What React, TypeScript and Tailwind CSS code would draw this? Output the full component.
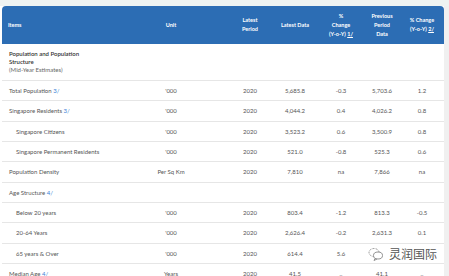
import React from 'react';

type Row = {
  item: string;
  note?: string;
  indent?: boolean;
  unit?: string;
  period?: string;
  latest?: string;
  change1?: string;
  previous?: string;
  change2?: string;
};

const rows: Row[] = [
  { item: 'Total Population', note: '3/', unit: "'000", period: '2020', latest: '5,685.8', change1: '-0.3', previous: '5,703.6', change2: '1.2' },
  { item: 'Singapore Residents', note: '3/', unit: "'000", period: '2020', latest: '4,044.2', change1: '0.4', previous: '4,026.2', change2: '0.8' },
  { item: 'Singapore Citizens', indent: true, unit: "'000", period: '2020', latest: '3,523.2', change1: '0.6', previous: '3,500.9', change2: '0.8' },
  { item: 'Singapore Permanent Residents', indent: true, unit: "'000", period: '2020', latest: '521.0', change1: '-0.8', previous: '525.3', change2: '0.6' },
  { item: 'Population Density', unit: 'Per Sq Km', period: '2020', latest: '7,810', change1: 'na', previous: '7,866', change2: 'na' },
  { item: 'Age Structure', note: '4/' },
  { item: 'Below 20 years', indent: true, unit: "'000", period: '2020', latest: '803.4', change1: '-1.2', previous: '813.3', change2: '-0.5' },
  { item: '20-64 Years', indent: true, unit: "'000", period: '2020', latest: '2,626.4', change1: '-0.2', previous: '2,631.3', change2: '0.1' },
  // последнее значение закрыто водяным знаком
  { item: '65 years & Over', indent: true, unit: "'000", period: '2020', latest: '614.4', change1: '5.6', previous: '' },
  { item: 'Median Age', note: '4/', unit: 'Years', period: '2020', latest: '41.5', change1: '..', previous: '41.1', change2: '..' },
];

const cols = 'grid grid-cols-[130px_78px_62px_46px_46px_36px_44px]';

const App = () => {
  return (
    <div className="relative w-[449px] h-[276px] overflow-hidden bg-white font-['Lato','Liberation_Sans',sans-serif]">
      <div className="h-[6px] bg-[#eef3f2]" />
      <div className="flex">
        <div className="w-[2px] bg-white" />
        <div className="w-[442px]">
          {/* шапка таблицы */}
          <div className={`${cols} h-[38px] items-center rounded-t-[4px] bg-[#2c6db4] text-[5.5px] leading-[9px] font-bold text-white`}>
            <div className="pl-[6px]">Items</div>
            <div className="text-center">Unit</div>
            <div className="pl-[18px] text-center">Latest<br />Period</div>
            <div className="text-center">Latest Data</div>
            <div className="text-center">%<br />Change<br />(Y-o-Y) <span className="underline">1/</span></div>
            <div className="text-center">Previous<br />Period<br />Data</div>
            <div className="text-center">% Change<br />(Y-o-Y) <span className="underline">2/</span></div>
          </div>

          <div className="h-[37px] border-b border-[#e6e6e6] pl-[7px] pt-[6px] text-[6px] leading-[8px]">
            <div className="font-semibold text-[#333]">Population and Population<br />Structure</div>
            <div className="text-[#666]">(Mid-Year Estimates)</div>
          </div>

          {rows.map((r) => (
            <div
              key={r.item}
              className={`${cols} h-[20.33px] items-center border-b border-[#e6e6e6] text-[6px] text-[#555]`}
            >
              <div className={r.indent ? 'pl-[14px]' : 'pl-[7px]'}>
                {r.item}
                {r.note && <span className="text-[#3b7fd6]"> {r.note}</span>}
              </div>
              <div className="text-center">{r.unit}</div>
              <div className="pl-[18px] text-center">{r.period}</div>
              <div className="text-center">{r.latest}</div>
              <div className="text-center">{r.change1}</div>
              <div className="text-center">{r.previous}</div>
              <div className="text-center">{r.change2}</div>
            </div>
          ))}
        </div>
        <div className="flex-1 bg-[#f0f0f0]" />
      </div>

      {/* водяной знак */}
      <div className="absolute left-[366px] top-[247px] flex items-center gap-[5px] px-[2px]">
        <svg width="16" height="14" viewBox="0 0 16 14" fill="none" stroke="#888" strokeWidth="0.9">
          <ellipse cx="6" cy="5.5" rx="5" ry="4" strokeDasharray="2 1.2" />
          <ellipse cx="10" cy="8.5" rx="4.5" ry="3.5" fill="white" />
          <path d="M7 11.5 L6 13.5 L9 12" />
        </svg>
        <span className="text-[12px] leading-[14px] text-[#555] font-['Noto_Sans_CJK_SC',sans-serif]">灵润国际</span>
      </div>
    </div>
  );
};

export default App;
